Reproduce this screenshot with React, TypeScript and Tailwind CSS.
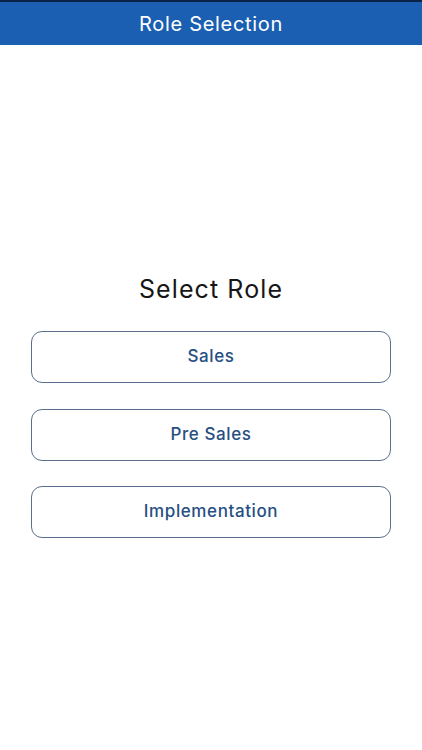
import React from 'react';

const ROLES = ['Sales', 'Pre Sales', 'Implementation'];

export default function App() {
  return (
    <div className="min-h-[750px] w-full bg-white font-['Inter',sans-serif]">
      {/* Top bar */}
      <header className="h-[45px] border-t-2 border-[#0b2347] bg-[#1a5fb2] flex items-center justify-center">
        <h1 className="text-white text-[20px] leading-none tracking-[0.7px]">Role Selection</h1>
      </header>

      <main className="px-[31px] pt-[229px] flex flex-col">
        <h2 className="text-center text-[25px] leading-[30px] tracking-[1.1px] text-[#161616]">Select Role</h2>

        <div className="mt-[27px] flex flex-col gap-[25.5px]">
          {ROLES.map((role) => (
            <button
              key={role}
              className="h-[52px] w-full rounded-[11px] border border-[#5b6f8c] bg-white text-[17px] tracking-[0.6px] font-medium text-[#264f82]"
            >
              {role}
            </button>
          ))}
        </div>
      </main>
    </div>
  );
}
